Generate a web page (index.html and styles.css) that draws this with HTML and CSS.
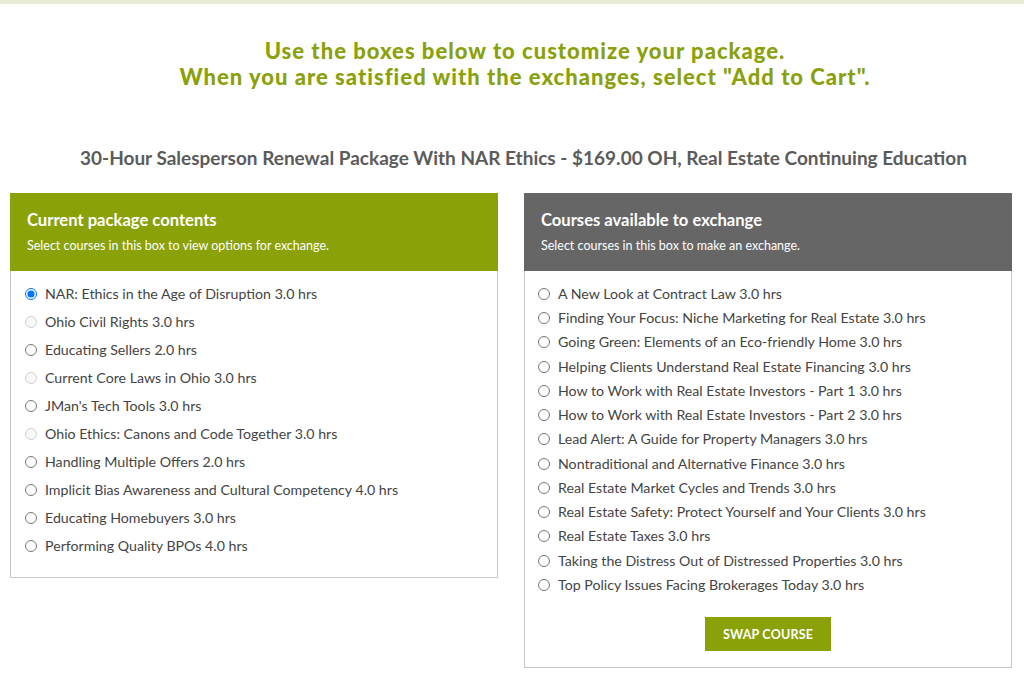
FILE: index.html
```html
<!DOCTYPE html>
<html>
<head>
<meta charset="utf-8">
<link rel="stylesheet" href="styles.css">
</head>
<body>
<div class="topbar"></div>
<div class="intro">
  <p>Use the boxes below to customize your package.</p>
  <p>When you are satisfied with the exchanges, select "Add to Cart".</p>
</div>
<h2 class="pkg-title">30-Hour Salesperson Renewal Package With NAR Ethics - $169.00 OH, Real Estate Continuing Education</h2>
<div class="boxes">
  <section class="box">
    <div class="box-head green">
      <h3>Current package contents</h3>
      <p>Select courses in this box to view options for exchange.</p>
    </div>
    <ul class="list current">
      <li><label><input type="radio" name="cur" checked> NAR: Ethics in the Age of Disruption 3.0 hrs</label></li>
      <li><label><input type="radio" name="cur" disabled> Ohio Civil Rights 3.0 hrs</label></li>
      <li><label><input type="radio" name="cur"> Educating Sellers 2.0 hrs</label></li>
      <li><label><input type="radio" name="cur" disabled> Current Core Laws in Ohio 3.0 hrs</label></li>
      <li><label><input type="radio" name="cur"> JMan's Tech Tools 3.0 hrs</label></li>
      <li><label><input type="radio" name="cur" disabled> Ohio Ethics: Canons and Code Together 3.0 hrs</label></li>
      <li><label><input type="radio" name="cur"> Handling Multiple Offers 2.0 hrs</label></li>
      <li><label><input type="radio" name="cur"> Implicit Bias Awareness and Cultural Competency 4.0 hrs</label></li>
      <li><label><input type="radio" name="cur"> Educating Homebuyers 3.0 hrs</label></li>
      <li><label><input type="radio" name="cur"> Performing Quality BPOs 4.0 hrs</label></li>
    </ul>
  </section>
  <section class="box">
    <div class="box-head gray">
      <h3>Courses available to exchange</h3>
      <p>Select courses in this box to make an exchange.</p>
    </div>
    <ul class="list avail">
      <li><label><input type="radio" name="av"> A New Look at Contract Law 3.0 hrs</label></li>
      <li><label><input type="radio" name="av"> Finding Your Focus: Niche Marketing for Real Estate 3.0 hrs</label></li>
      <li><label><input type="radio" name="av"> Going Green: Elements of an Eco-friendly Home 3.0 hrs</label></li>
      <li><label><input type="radio" name="av"> Helping Clients Understand Real Estate Financing 3.0 hrs</label></li>
      <li><label><input type="radio" name="av"> How to Work with Real Estate Investors - Part 1 3.0 hrs</label></li>
      <li><label><input type="radio" name="av"> How to Work with Real Estate Investors - Part 2 3.0 hrs</label></li>
      <li><label><input type="radio" name="av"> Lead Alert: A Guide for Property Managers 3.0 hrs</label></li>
      <li><label><input type="radio" name="av"> Nontraditional and Alternative Finance 3.0 hrs</label></li>
      <li><label><input type="radio" name="av"> Real Estate Market Cycles and Trends 3.0 hrs</label></li>
      <li><label><input type="radio" name="av"> Real Estate Safety: Protect Yourself and Your Clients 3.0 hrs</label></li>
      <li><label><input type="radio" name="av"> Real Estate Taxes 3.0 hrs</label></li>
      <li><label><input type="radio" name="av"> Taking the Distress Out of Distressed Properties 3.0 hrs</label></li>
      <li><label><input type="radio" name="av"> Top Policy Issues Facing Brokerages Today 3.0 hrs</label></li>
    </ul>
    <div class="actions"><button class="swap">SWAP COURSE</button></div>
  </section>
</div>
</body>
</html>
```

FILE: styles.css
```css
* { box-sizing: border-box; }
html, body { margin: 0; padding: 0; background: #fff; }
body { font-family: "Lato", "Open Sans", sans-serif; color: #444; }

.topbar { height: 4px; background: #e8ecd7; }

.intro {
  margin-top: 34px;
  padding-left: 26px;
  text-align: center;
  color: #8aa10b;
  font-family: "Lato", sans-serif;
  font-weight: 900;
  font-size: 22px;
  letter-spacing: 1px;
  line-height: 26.4px;
}
.intro p { margin: 0; }

.pkg-title {
  margin: 56px 0 0 0;
  padding-left: 80px;
  font-family: "Lato", sans-serif;
  font-weight: 700;
  font-size: 19px;
  line-height: 22px;
  color: #5b5b5b;
}

.boxes {
  display: flex;
  align-items: flex-start;
  gap: 26px;
  margin: 24px 12px 0 10px;
}
.box {
  flex: 1;
  border: 1px solid #c8c8c8;
  border-top: none;
}
.box-head {
  height: 78px;
  padding: 17px 17px 0 17px;
  color: #fff;
  margin: 0 -1px;
}
.box-head.green { background: #8aa108; }
.box-head.gray { background: #666666; }
.box-head h3 {
  margin: 0;
  font-size: 16.6px;
  font-weight: 700;
  line-height: 20px;
}
.box-head p {
  margin: 8px 0 0 0;
  font-size: 12.5px;
  line-height: 15px;
}

.list {
  list-style: none;
  margin: 0;
  padding: 14px 0 12px 14px;
}
.list li {
  font-size: 14.2px;
  color: #444;
}
.list.current li { height: 28px; line-height: 18px; }
.list.avail { padding-left: 13px; padding-bottom: 17px; }
.list.avail li { height: 24.25px; line-height: 18px; }
.list label { display: flex; align-items: center; gap: 8px; }
.list input {
  margin: 0;
  width: 12px;
  height: 12px;
}

.actions {
  display: flex;
  justify-content: center;
  padding: 0 0 16px 0;
}
.swap {
  background: #8aa108;
  color: #fff;
  border: none;
  font-family: "Lato", sans-serif;
  font-weight: 700;
  font-size: 12.5px;
  width: 126px;
  height: 34px;
  letter-spacing: 0.2px;
}
```
